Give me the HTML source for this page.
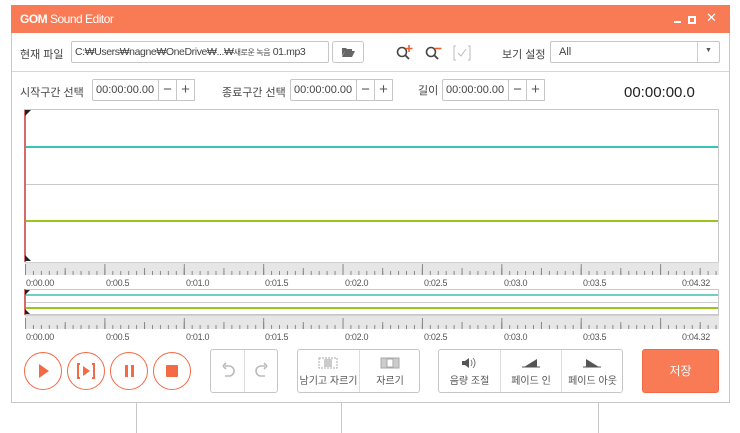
<!DOCTYPE html>
<html><head><meta charset="utf-8"><style>
*{margin:0;padding:0;box-sizing:border-box}
body{width:740px;height:433px;background:#fff;font-family:"Liberation Sans","Noto Sans CJK KR",sans-serif;font-size:11px;color:#333;position:relative;overflow:hidden}
.a{position:absolute}
.win{left:11px;top:5px;width:719px;height:398px;border:1px solid #c8c8c8;background:#fff}
.title{left:11px;top:5px;width:719px;height:28px;background:#f97b56;color:#fff}
.inp{border:1px solid #c6c6c6;background:#fff;height:22px;line-height:20px;padding-left:4px;font-size:11px;color:#444;border-radius:2px;white-space:nowrap;overflow:hidden}
.btn{border:1px solid #c6c6c6;background:#fff;height:22px;text-align:center;line-height:19px;font-size:15px;color:#555}
.lbl{font-size:11px;color:#444}
.ruler{background-color:#e6e6e6;border-top:1px solid #d0d0d0;
background-image:linear-gradient(to right,#888 1px,transparent 1px),linear-gradient(to right,#888 1px,transparent 1px),linear-gradient(to right,#888 1px,transparent 1px);
background-size:79.4px 11px,39.7px 7px,7.94px 4px;background-position:0 100%,0 100%,0 100%;background-repeat:repeat-x}
.tl{font-size:9px;color:#555;top:0;letter-spacing:-0.3px}
.circ{width:38px;height:38px;border:1.5px solid #f26b45;border-radius:50%;top:352px}
.grp{border:1px solid #c6c6c6;border-radius:3px;top:349px;height:44px;background:#fff}
.cell{position:absolute;top:0;height:42px;text-align:center;font-size:10px;color:#555}
.cell span{position:absolute;left:0;right:0;top:22px}
</style></head><body>
<div class="a win"></div>
<div class="a title"><span class="a" style="left:9px;top:7px;font-weight:bold;font-size:12px;letter-spacing:-0.5px">GOM <span style="font-weight:normal">Sound Editor</span></span>
<span class="a" style="left:663px;top:16px;width:7px;height:2px;background:#fff"></span>
<span class="a" style="left:677px;top:11px;width:8px;height:8px;border:2px solid #fff"></span>
<span class="a" style="left:695px;top:5px;font-size:13px">✕</span></div>

<span class="a lbl" style="left:20px;top:46px">현재 파일</span>
<div class="a inp" style="left:71px;top:41px;width:258px;font-size:10.5px;letter-spacing:-0.4px;padding-left:3px">C:₩Users₩nagne₩OneDrive₩...₩<span style="font-size:8px">새로운 녹음</span> 01.mp3</div>
<div class="a btn" style="left:332px;top:41px;width:32px;border-radius:3px"><svg width="14" height="12" viewBox="0 0 14 12" style="margin-top:4px"><path d="M1 2h4l1 1h5v2H4L1 10z" fill="#666"/><path d="M4 5h10l-3 6H1z" fill="#666"/></svg></div>
<svg class="a" style="left:396px;top:44px" width="18" height="18"><circle cx="6" cy="8" r="4.5" fill="none" stroke="#444" stroke-width="1.6"/><path d="M9 11l4 4" stroke="#444" stroke-width="1.8"/><path d="M13 1v7M9.5 4.5h7" stroke="#f25d30" stroke-width="1.6"/></svg>
<svg class="a" style="left:425px;top:44px" width="18" height="18"><circle cx="6" cy="8" r="4.5" fill="none" stroke="#444" stroke-width="1.6"/><path d="M9 11l4 4" stroke="#444" stroke-width="1.8"/><path d="M9.5 4.5h7" stroke="#f25d30" stroke-width="1.6"/></svg>
<svg class="a" style="left:453px;top:44px" width="18" height="18"><path d="M3 2H1v14h2M15 2h2v14h-2" stroke="#bbb" fill="none"/><path d="M5 9l3 3 5-7" stroke="#bbb" fill="none"/></svg>
<span class="a lbl" style="left:502px;top:46px">보기 설정</span>
<div class="a inp" style="left:550px;top:41px;width:170px;padding-left:8px">All</div>
<div class="a" style="left:697px;top:42px;width:1px;height:20px;background:#ccc"></div>
<span class="a" style="left:705px;top:47px;font-size:7px;color:#555">▼</span>
<div class="a" style="left:12px;top:71px;width:717px;height:1px;background:#d6d6d6"></div>

<span class="a lbl" style="left:20px;top:84px">시작구간 선택</span>
<div class="a inp" style="left:92px;top:79px;width:67px;padding-left:3px">00:00:00.00</div>
<div class="a btn" style="left:158px;top:79px;width:19px">−</div><div class="a btn" style="left:176px;top:79px;width:19px">+</div>
<span class="a lbl" style="left:222px;top:84px">종료구간 선택</span>
<div class="a inp" style="left:290px;top:79px;width:67px;padding-left:3px">00:00:00.00</div>
<div class="a btn" style="left:356px;top:79px;width:19px">−</div><div class="a btn" style="left:374px;top:79px;width:19px">+</div>
<span class="a lbl" style="left:418px;top:82px">길이</span>
<div class="a inp" style="left:442px;top:79px;width:67px;padding-left:3px">00:00:00.00</div>
<div class="a btn" style="left:508px;top:79px;width:19px">−</div><div class="a btn" style="left:526px;top:79px;width:19px">+</div>
<span class="a" style="left:624px;top:84px;font-size:15px;color:#222">00:00:00.0</span>

<div class="a" style="left:24px;top:109px;width:695px;height:153px;border:1px solid #c8c8c8;border-bottom:none;background:#fff"></div>
<div class="a" style="left:25px;top:146px;width:693px;height:2px;background:#35c4b5"></div>
<div class="a" style="left:25px;top:184px;width:693px;height:1px;background:#c8c8c8"></div>
<div class="a" style="left:25px;top:220px;width:693px;height:2px;background:#9ac51c"></div>
<div class="a" style="left:24px;top:110px;width:2px;height:152px;background:#d46a6a"></div>
<svg class="a" style="left:25px;top:110px" width="6" height="6"><path d="M0 0h6L0 6z" fill="#222"/></svg>
<svg class="a" style="left:25px;top:255px" width="6" height="6"><path d="M0 0v6h6z" fill="#222"/></svg>
<div class="a ruler" style="left:25px;top:262px;width:694px;height:13px"></div>
<div class="a" style="left:24px;top:278px;width:700px;height:12px">
<span class="a tl" style="left:2px">0:00.00</span><span class="a tl" style="left:82px">0:00.5</span><span class="a tl" style="left:162px">0:01.0</span><span class="a tl" style="left:241px">0:01.5</span><span class="a tl" style="left:321px">0:02.0</span><span class="a tl" style="left:400px">0:02.5</span><span class="a tl" style="left:480px">0:03.0</span><span class="a tl" style="left:559px">0:03.5</span><span class="a tl" style="left:658px">0:04.32</span></div>

<div class="a" style="left:24px;top:289px;width:695px;height:26px;border:1px solid #c8c8c8;background:#fff"></div>
<div class="a" style="left:25px;top:294px;width:693px;height:2px;background:#6fcfc4"></div>
<div class="a" style="left:25px;top:302px;width:693px;height:1px;background:#ccc"></div>
<div class="a" style="left:25px;top:307px;width:693px;height:2px;background:#9ac51c"></div>
<div class="a" style="left:24px;top:289px;width:2px;height:26px;background:#d46a6a"></div>
<svg class="a" style="left:25px;top:290px" width="5" height="5"><path d="M0 0h5L0 5z" fill="#222"/></svg>
<svg class="a" style="left:25px;top:309px" width="5" height="5"><path d="M0 0v5h5z" fill="#222"/></svg>
<div class="a ruler" style="left:25px;top:315px;width:694px;height:14px"></div>
<div class="a" style="left:24px;top:332px;width:700px;height:12px">
<span class="a tl" style="left:2px">0:00.00</span><span class="a tl" style="left:82px">0:00.5</span><span class="a tl" style="left:162px">0:01.0</span><span class="a tl" style="left:241px">0:01.5</span><span class="a tl" style="left:321px">0:02.0</span><span class="a tl" style="left:400px">0:02.5</span><span class="a tl" style="left:480px">0:03.0</span><span class="a tl" style="left:559px">0:03.5</span><span class="a tl" style="left:658px">0:04.32</span></div>

<div class="a circ" style="left:24px"><svg width="36" height="36"><path d="M14 11l10 7-10 7z" fill="#f26b45"/></svg></div>
<div class="a circ" style="left:67px"><svg width="36" height="36"><path d="M12 11h-2v14h2M24 11h2v14h-2" stroke="#f26b45" stroke-width="2" fill="none"/><path d="M15 13l7 5-7 5z" fill="#f26b45"/></svg></div>
<div class="a circ" style="left:110px"><svg width="36" height="36"><path d="M14 12h3v12h-3zM20 12h3v12h-3z" fill="#f26b45"/></svg></div>
<div class="a circ" style="left:153px"><svg width="36" height="36"><rect x="12" y="12" width="12" height="12" rx="1" fill="#f26b45"/></svg></div>

<div class="a grp" style="left:210px;width:68px"><div class="a" style="left:33px;top:0;width:1px;height:42px;background:#ddd"></div>
<svg class="a" style="left:10px;top:12px" width="14" height="18"><path d="M4 4H8a4 4 0 010 10H4M2 4l3-3M2 4l3 3" stroke="#bbb" stroke-width="1.6" fill="none"/></svg>
<svg class="a" style="left:44px;top:12px" width="14" height="18"><path d="M10 4H6a4 4 0 000 10h4M12 4l-3-3M12 4l-3 3" stroke="#bbb" stroke-width="1.6" fill="none"/></svg></div>

<div class="a grp" style="left:297px;width:123px"><div class="a" style="left:61px;top:0;width:1px;height:42px;background:#ddd"></div>
<div class="cell" style="left:0;width:61px"><svg class="a" style="left:20px;top:7px" width="20" height="12"><rect x="1" y="1" width="18" height="10" fill="none" stroke="#aaa" stroke-dasharray="2 1"/><rect x="6" y="2" width="8" height="8" fill="#ccc"/></svg><span>남기고 자르기</span></div>
<div class="cell" style="left:62px;width:60px"><svg class="a" style="left:20px;top:7px" width="20" height="12"><rect x="1" y="1" width="18" height="10" fill="#ccc" stroke="#aaa"/><rect x="7" y="2" width="6" height="8" fill="#fff" stroke="#aaa"/></svg><span>자르기</span></div></div>

<div class="a grp" style="left:438px;width:185px"><div class="a" style="left:61px;top:0;width:1px;height:42px;background:#ddd"></div><div class="a" style="left:122px;top:0;width:1px;height:42px;background:#ddd"></div>
<div class="cell" style="left:0;width:61px"><svg class="a" style="left:22px;top:7px" width="16" height="12"><path d="M1 4h3l4-3v10l-4-3H1z" fill="#555"/><path d="M10 3q2 3 0 6M12 1q4 5 0 10" stroke="#777" fill="none"/></svg><span>음량 조절</span></div>
<div class="cell" style="left:62px;width:60px"><svg class="a" style="left:21px;top:7px" width="18" height="12"><path d="M2 10L15 2v8z" fill="#555"/><path d="M0 10h18" stroke="#555"/></svg><span>페이드 인</span></div>
<div class="cell" style="left:123px;width:61px"><svg class="a" style="left:21px;top:7px" width="18" height="12"><path d="M3 2l13 8H3z" fill="#555"/><path d="M0 10h18" stroke="#555"/></svg><span>페이드 아웃</span></div></div>

<div class="a" style="left:642px;top:349px;width:77px;height:44px;background:#f97b56;border-radius:3px;border:1px solid #ef6a45;color:#fff;font-size:12px;text-align:center;line-height:42px">저장</div>

<div class="a" style="left:136px;top:403px;width:1px;height:30px;background:#c8c8c8"></div>
<div class="a" style="left:341px;top:403px;width:1px;height:30px;background:#c8c8c8"></div>
<div class="a" style="left:598px;top:403px;width:1px;height:30px;background:#c8c8c8"></div>
</body></html>
